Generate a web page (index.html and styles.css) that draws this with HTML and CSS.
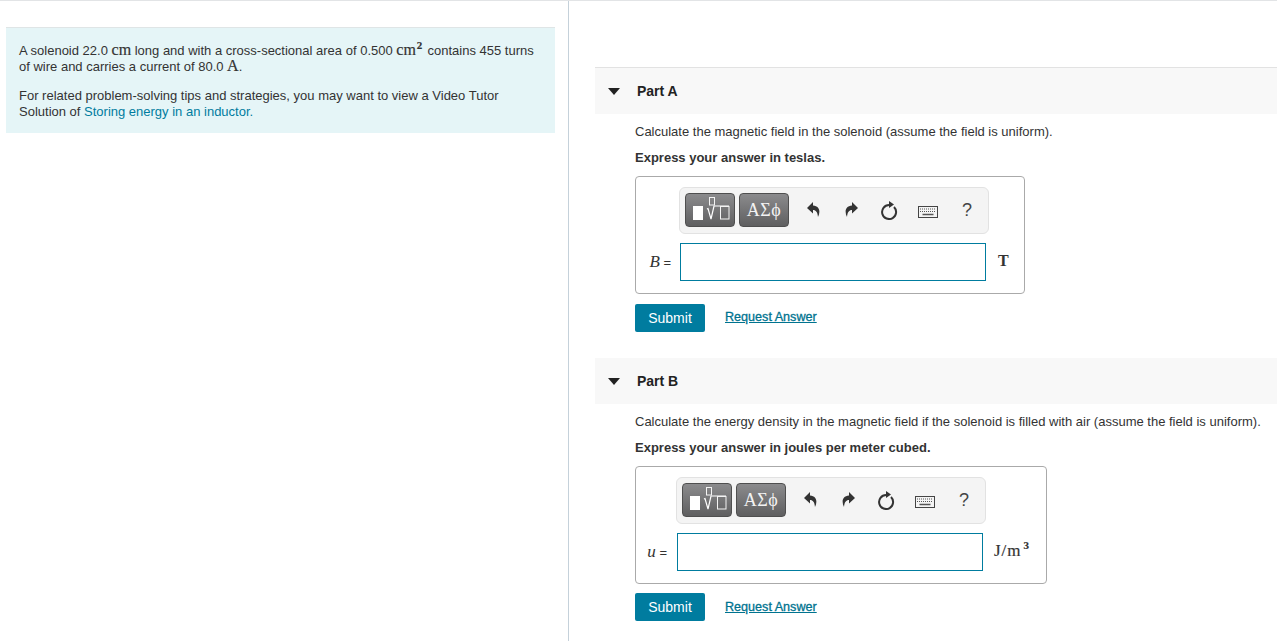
FILE: index.html
```html
<!DOCTYPE html>
<html lang="en">
<head>
<meta charset="utf-8">
<title>Solenoid</title>
<link rel="stylesheet" href="styles.css">
</head>
<body>
<div class="page">
  <aside class="left">
    <div class="intro">
      <p class="p1">A solenoid 22.0 <span class="m">cm</span> long and with a cross-sectional area of 0.500 <span class="m">cm<sup>2</sup></span> contains 455 turns of wire and carries a current of 80.0 <span class="m">A</span>.</p>
      <p class="p2">For related problem-solving tips and strategies, you may want to view a Video Tutor Solution of <a href="#" class="link">Storing energy in an inductor.</a></p>
    </div>
  </aside>
  <main class="right">
    <section class="part part-a">
      <header class="part-head">
        <svg class="caret" width="12" height="7" viewBox="0 0 12 7"><path d="M0 0H12L6 7Z" fill="#222"/></svg>
        <span>Part A</span>
      </header>
      <div class="part-body">
        <p class="q">Calculate the magnetic field in the solenoid (assume the field is uniform).</p>
        <p class="ex">Express your answer in teslas.</p>
        <div class="answer a-box">
          <div class="tools t-a">
            <button class="tb tb1"><svg width="48" height="32" viewBox="0 0 48 32"><rect x="7" y="12" width="10" height="14" fill="#fff"/><rect x="23.500" y="3.500" width="5" height="7.500" fill="none" stroke="#f4f4f4"/><path d="M21 15l1-.5 3 10.500 3-13H43" fill="none" stroke="#fff" stroke-width="1.200"/><rect x="34.500" y="12.500" width="8.500" height="12.500" fill="none" stroke="#f4f4f4"/></svg></button>
            <button class="tb tb2">ΑΣϕ</button>
            <div class="icons">
              <svg class="ic i-undo" width="13" height="16" viewBox="0 0 13 16"><path d="M6 0L0 6l6 5.500V8c3 0 4.500 2 5 7 2.500-5 2-11-5-11.500Z" fill="#333"/></svg>
              <svg class="ic i-redo" width="13" height="16" viewBox="0 0 13 16"><path d="M7 0l6 6-6 5.500V8c-3 0-4.500 2-5 7-2.500-5-2-11 5-11.500Z" fill="#333"/></svg>
              <svg class="ic i-reload" width="17" height="19" viewBox="0 0 17 19"><path d="M8 4A7 7 0 1 0 13 6" fill="none" stroke="#333" stroke-width="2"/><path d="M8 0l5 3.500-5 3.500Z" fill="#333"/></svg>
              <svg class="ic i-kb" width="20" height="12" viewBox="0 0 20 12"><rect x=".5" y=".5" width="19" height="11" fill="#f4f4f4" stroke="#444"/><path d="M2 3h16M2 5.500h16" stroke="#555" stroke-dasharray="1 1" fill="none"/><path d="M4.500 8.500h11" stroke="#555" stroke-width="1.500"/></svg>
              <span class="help">?</span>
            </div>
          </div>
          <div class="row">
            <span class="lab lab-a"><i class="v">B</i> =</span>
            <input class="inp" type="text" aria-label="B">
            <span class="unit unit-a">T</span>
          </div>
        </div>
        <div class="actions">
          <button class="submit">Submit</button>
          <a href="#" class="req">Request Answer</a>
        </div>
      </div>
    </section>
    <section class="part part-b">
      <header class="part-head">
        <svg class="caret" width="12" height="7" viewBox="0 0 12 7"><path d="M0 0H12L6 7Z" fill="#222"/></svg>
        <span>Part B</span>
      </header>
      <div class="part-body">
        <p class="q">Calculate the energy density in the magnetic field if the solenoid is filled with air (assume the field is uniform).</p>
        <p class="ex">Express your answer in joules per meter cubed.</p>
        <div class="answer b-box">
          <div class="tools t-b">
            <button class="tb tb1"><svg width="48" height="32" viewBox="0 0 48 32"><rect x="7" y="12" width="10" height="14" fill="#fff"/><rect x="23.500" y="3.500" width="5" height="7.500" fill="none" stroke="#f4f4f4"/><path d="M21 15l1-.5 3 10.500 3-13H43" fill="none" stroke="#fff" stroke-width="1.200"/><rect x="34.500" y="12.500" width="8.500" height="12.500" fill="none" stroke="#f4f4f4"/></svg></button>
            <button class="tb tb2">ΑΣϕ</button>
            <div class="icons">
              <svg class="ic i-undo" width="13" height="16" viewBox="0 0 13 16"><path d="M6 0L0 6l6 5.500V8c3 0 4.500 2 5 7 2.500-5 2-11-5-11.500Z" fill="#333"/></svg>
              <svg class="ic i-redo" width="13" height="16" viewBox="0 0 13 16"><path d="M7 0l6 6-6 5.500V8c-3 0-4.500 2-5 7-2.500-5-2-11 5-11.500Z" fill="#333"/></svg>
              <svg class="ic i-reload" width="17" height="19" viewBox="0 0 17 19"><path d="M8 4A7 7 0 1 0 13 6" fill="none" stroke="#333" stroke-width="2"/><path d="M8 0l5 3.500-5 3.500Z" fill="#333"/></svg>
              <svg class="ic i-kb" width="20" height="12" viewBox="0 0 20 12"><rect x=".5" y=".5" width="19" height="11" fill="#f4f4f4" stroke="#444"/><path d="M2 3h16M2 5.500h16" stroke="#555" stroke-dasharray="1 1" fill="none"/><path d="M4.500 8.500h11" stroke="#555" stroke-width="1.500"/></svg>
              <span class="help">?</span>
            </div>
          </div>
          <div class="row">
            <span class="lab lab-b"><i class="v">u</i> =</span>
            <input class="inp" type="text" aria-label="u">
            <span class="unit unit-b">J/m<sup>3</sup></span>
          </div>
        </div>
        <div class="actions">
          <button class="submit">Submit</button>
          <a href="#" class="req">Request Answer</a>
        </div>
      </div>
    </section>
  </main>
</div>
</body>
</html>
```
FILE: styles.css
```css
* { box-sizing: border-box; }
html, body { margin: 0; height: 100%; overflow: hidden; }
body { font-family: "Liberation Sans", Arial, sans-serif; font-size: 13px; color: #333; background: #fff; }
.page { display: flex; height: 641px; border-top: 1px solid #e2e4e6; }
.left { width: 569px; flex: none; border-right: 1px solid #c5d1da; padding: 26px 13px 0 6px; }
.intro { background: #e5f5f7; border-top: 1px solid #dfe5e6; height: 106px; padding: 15px 13px 0 13px; line-height: 16px; }
.intro p { margin: 0; }
.p1 { width: 524px; }
.p2 { margin-top: 13px !important; width: 490px; }
.m { font-family: "Liberation Serif", serif; font-size: 16px; line-height: 0; -webkit-text-stroke: .2px #333; }
.m sup { font-size: 11px; line-height: 0; font-weight: bold; vertical-align: 6px; margin: 0 1.500px 0 1px; }
.link { color: #007c9f; text-decoration: none; }
.right { flex: 1; padding: 66px 0 0 26px; min-width: 0; }
.part-head { height: 46px; background: #f8f8f8; display: flex; align-items: center; font-weight: bold; font-size: 14px; color: #222; padding-left: 13px; }
.part-a .part-head { height: 47px; border-top: 1px solid #e2e2e2; }
.caret { margin-right: 17px; flex: none; }
.q { margin: 0; padding-top: 10px; line-height: 16px; white-space: nowrap; }
.part-body { padding-left: 40px; }
.ex { margin: 10px 0 0; line-height: 16px; font-weight: bold; }
.answer { border: 1px solid #aaa; border-radius: 4px; margin-top: 10px; height: 118px; padding: 10px 0 0; }
.a-box { width: 390px; }
.b-box { width: 412px; }
.tools { height: 47px; width: 310px; background: #f4f4f4; border: 1px solid #e2e2e2; border-radius: 6px; display: flex; align-items: center; padding-left: 5px; gap: 4px; }
.t-a { margin-left: 43px; }
.t-b { margin-left: 40px; }
.tb { height: 34px; margin-bottom: 1px; border: 1px solid #4f4f4f; border-radius: 4px; background: linear-gradient(#8b8b8d, #5f5f60); padding: 0; color: #f2f2f2; font-family: "Liberation Serif", serif; font-size: 18px; letter-spacing: .5px; display: flex; align-items: center; justify-content: center; }
.tb1 { width: 50px; }
.tb2 { width: 50px; }
.icons { display: flex; align-items: center; margin-left: 14px; margin-bottom: 1px; }
.ic { flex: none; }
.i-undo { margin-right: 25px; }
.i-redo { margin-right: 23px; }
.i-reload { margin-right: 20px; }
.i-kb { margin-right: 24px; margin-top: 4px; }
.help { font-size: 18px; line-height: 18px; color: #444; }
.row { display: flex; align-items: center; margin-top: 9px; }
.lab { text-align: right; font-size: 13px; white-space: nowrap; }
.lab-a { width: 44px; padding-right: 9px; }
.lab-b { width: 41px; padding-right: 10px; }
.v { font-family: "Liberation Serif", serif; font-size: 17px; }
.inp { width: 306px; height: 38px; border: 1px solid #007c9f; background: #fff; padding: 0; outline: none; }
.unit { font-family: "Liberation Serif", serif; }
.unit-a { margin-left: 12px; font-size: 16px; font-weight: bold; margin-top: -2px; }
.unit-b { margin-left: 11px; font-size: 17px; letter-spacing: 1px; margin-top: -3px; -webkit-text-stroke: .2px #333; }
.unit-b sup { font-size: 11px; line-height: 0; font-weight: bold; margin-left: 2px; }
.actions { display: flex; align-items: center; margin-top: 10px; }
.part-b .actions { margin-top: 9px; }
.submit { width: 70px; height: 28px; background: #007c9f; color: #fff; border: 0; border-radius: 2px; padding: 0; font-family: "Liberation Sans", sans-serif; font-size: 14px; }
.req { margin-left: 20px; color: #00738f; font-size: 12.600px; -webkit-text-stroke: .3px #00738f; position: relative; top: -1px; }
.part-b .req { top: 0; }
.part-b { margin-top: 26px; }
```
